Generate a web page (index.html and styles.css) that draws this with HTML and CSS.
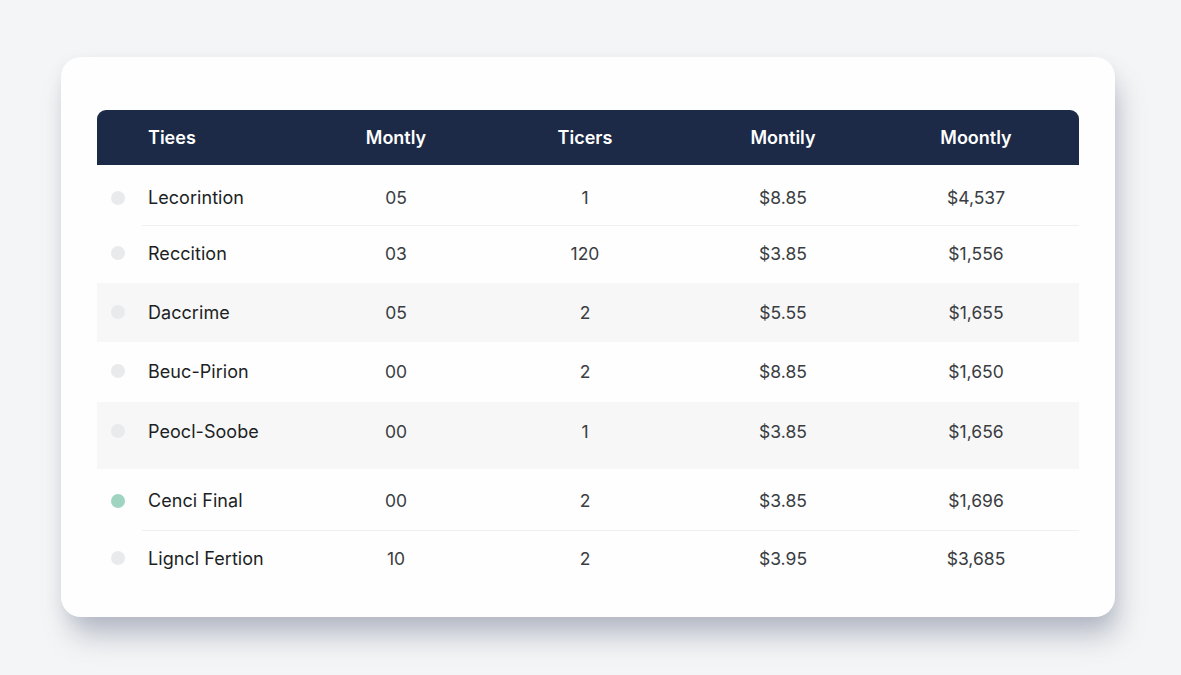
FILE: index.html
```html
<!DOCTYPE html>
<html lang="en">
<head>
<meta charset="utf-8">
<title>Table</title>
<link rel="stylesheet" href="styles.css">
</head>
<body>
<div class="page">
  <div class="card">
    <div class="table">
      <div class="row head">
        <div class="c dotc"></div>
        <div class="c name">Tiees</div>
        <div class="c num">Montly</div>
        <div class="c num">Ticers</div>
        <div class="c num">Montily</div>
        <div class="c num">Moontly</div>
      </div>
      <div class="row r1 sep">
        <div class="c dotc"><span class="dot"></span></div>
        <div class="c name">Lecorintion</div>
        <div class="c num">05</div>
        <div class="c num">1</div>
        <div class="c num">$8.85</div>
        <div class="c num">$4,537</div>
      </div>
      <div class="row r2">
        <div class="c dotc"><span class="dot"></span></div>
        <div class="c name">Reccition</div>
        <div class="c num">03</div>
        <div class="c num">120</div>
        <div class="c num">$3.85</div>
        <div class="c num">$1,556</div>
      </div>
      <div class="row r3 alt">
        <div class="c dotc"><span class="dot"></span></div>
        <div class="c name">Daccrime</div>
        <div class="c num">05</div>
        <div class="c num">2</div>
        <div class="c num">$5.55</div>
        <div class="c num">$1,655</div>
      </div>
      <div class="row r4">
        <div class="c dotc"><span class="dot"></span></div>
        <div class="c name">Beuc-Pirion</div>
        <div class="c num">00</div>
        <div class="c num">2</div>
        <div class="c num">$8.85</div>
        <div class="c num">$1,650</div>
      </div>
      <div class="row r5 alt">
        <div class="c dotc"><span class="dot"></span></div>
        <div class="c name">Peocl-Soobe</div>
        <div class="c num">00</div>
        <div class="c num">1</div>
        <div class="c num">$3.85</div>
        <div class="c num">$1,656</div>
      </div>
      <div class="row r6 sep">
        <div class="c dotc"><span class="dot green"></span></div>
        <div class="c name">Cenci Final</div>
        <div class="c num">00</div>
        <div class="c num">2</div>
        <div class="c num">$3.85</div>
        <div class="c num">$1,696</div>
      </div>
      <div class="row r7">
        <div class="c dotc"><span class="dot"></span></div>
        <div class="c name">Ligncl Fertion</div>
        <div class="c num">10</div>
        <div class="c num">2</div>
        <div class="c num">$3.95</div>
        <div class="c num">$3,685</div>
      </div>
    </div>
  </div>
</div>
</body>
</html>
```
FILE: styles.css
```css
html, body {
  margin: 0;
  padding: 0;
}
body {
  background: #f4f5f6;
  font-family: "Inter", "Noto Sans", sans-serif;
  color: #24272c;
  width: 1181px;
  height: 675px;
  overflow: hidden;
}
.page {
  padding: 57px 66px 0 61px;
}
.card {
  width: 1054px;
  height: 560px;
  box-sizing: border-box;
  background: #fefefe;
  border-radius: 20px;
  padding: 53px 36px 0 36px;
  box-shadow: 6px 22px 28px -4px rgba(100, 110, 135, 0.42), 0 4px 14px rgba(120, 130, 150, 0.1);
}
.table {
  width: 982px;
}
.row {
  display: grid;
  grid-template-columns: 51px 152px 192px 186px 210px 176px 15px;
  align-items: center;
  box-sizing: border-box;
}
.c {
  font-size: 17.5px;
}
.name {
  text-align: left;
  font-size: 18px;
  font-weight: 400;
  letter-spacing: 0.05px;
  color: #1c1f24;
}
.num {
  text-align: center;
  color: #3a3d42;
}
.head {
  background: #1c2a47;
  height: 55px;
  border-radius: 9px 9px 0 0;
}
.head .c {
  color: #ffffff;
  font-weight: 600;
  font-size: 18px;
  letter-spacing: 0;
}
.dotc {
  display: flex;
  justify-content: flex-start;
  padding-left: 14px;
}
.dot {
  width: 14px;
  height: 14px;
  border-radius: 50%;
  background: #e9eaec;
}
.dot.green {
  background: #9fd4c1;
}
.alt {
  background: #f7f7f8;
}
.sep {
  border-bottom: 1px solid #f0f0f2;
  border-image: linear-gradient(to right, transparent 46px, #eff0f2 46px) 1;
}
.r1 { height: 61px; padding-top: 5px; }
.r2 { height: 57px; padding-bottom: 3px; }
.r3 { height: 59px; padding-bottom: 1px; }
.r4 { height: 60px; padding-bottom: 2px; }
.r5 { height: 67px; padding-bottom: 9px; }
.r6 { height: 62px; padding-top: 2px; }
.r7 { height: 54px; }
```
